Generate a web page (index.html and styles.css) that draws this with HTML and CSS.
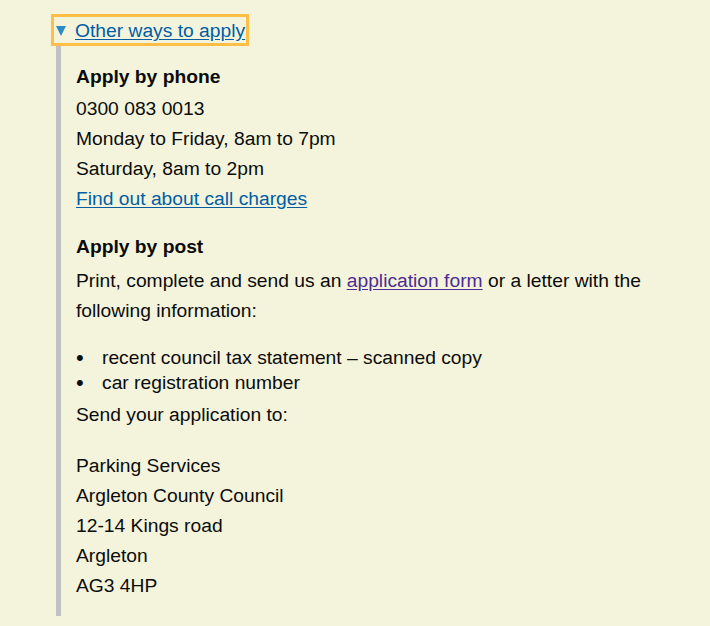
FILE: index.html
```html
<!DOCTYPE html>
<html lang="en">
<head>
<meta charset="utf-8">
<title>Other ways to apply</title>
<link rel="stylesheet" href="styles.css">
</head>
<body>
<div class="details">
  <div class="summary-row">
    <a class="summary" href="#"><span class="arrow"></span><span class="summary-text">Other ways to apply</span></a>
  </div>
  <div class="panel">
    <h3 class="heading">Apply by phone</h3>
    <p class="line">0300 083 0013</p>
    <p class="line">Monday to Friday, 8am to 7pm</p>
    <p class="line">Saturday, 8am to 2pm</p>
    <p class="line"><a class="link" href="#">Find out about call charges</a></p>

    <h3 class="heading heading-post">Apply by post</h3>
    <p class="para">Print, complete and send us an <a class="link visited" href="#">application form</a> or a letter with the following information:</p>
    <ul class="bullets">
      <li>recent council tax statement – scanned copy</li>
      <li>car registration number</li>
    </ul>
    <p class="line">Send your application to:</p>
    <p class="address">Parking Services<br>Argleton County Council<br>12-14 Kings road<br>Argleton<br>AG3 4HP</p>
  </div>
</div>
</body>
</html>
```

FILE: styles.css
```css
html, body {
  margin: 0;
  padding: 0;
  background: #f4f4dc;
}
body {
  font-family: "Liberation Sans", Arial, sans-serif;
  font-size: 19.25px;
  line-height: 30px;
  color: #0b0c0c;
}
.details {
  padding: 17px 0 12px 54px;
  width: 600px;
}
.summary-row {
  display: flex;
  height: 25px;
}
.summary {
  display: flex;
  align-items: center;
  height: 26px;
  line-height: 24px;
  padding: 2px 1px 0 2px;
  box-sizing: border-box;
  color: #005ea5;
  text-decoration: none;
  outline: 3px solid #ffbf47;
}
.arrow {
  width: 0;
  height: 0;
  border-left: 5.5px solid transparent;
  border-right: 5.5px solid transparent;
  border-top: 10px solid #2b8cc4;
  margin: 0 9px 1px 0;
}
.summary-text {
  text-decoration: underline;
  text-underline-offset: 2px;
}
.panel {
  margin: 4px 0 0 2px;
  border-left: 5px solid #bfc1c3;
  padding: 16px 0 15px 15px;
}
.heading {
  margin: 0 0 2px;
  font-size: 19.25px;
  font-weight: bold;
  line-height: 30px;
}
.heading-post {
  margin-top: 18px;
  margin-bottom: 4px;
}
.line {
  margin: 0;
}
.para {
  margin: 0;
  width: 580px;
}
.link {
  color: #005ea5;
  text-decoration: underline;
  text-underline-offset: 2px;
}
.link.visited {
  color: #4c2c92;
}
.bullets {
  margin: 19px 0 5px;
  padding: 0;
  list-style: none;
  line-height: 25px;
}
.bullets li {
  display: flex;
}
.bullets li::before {
  content: "\2022";
  flex: 0 0 26px;
  font-size: 22px;
}
.address {
  margin: 21px 0 0;
}
```
